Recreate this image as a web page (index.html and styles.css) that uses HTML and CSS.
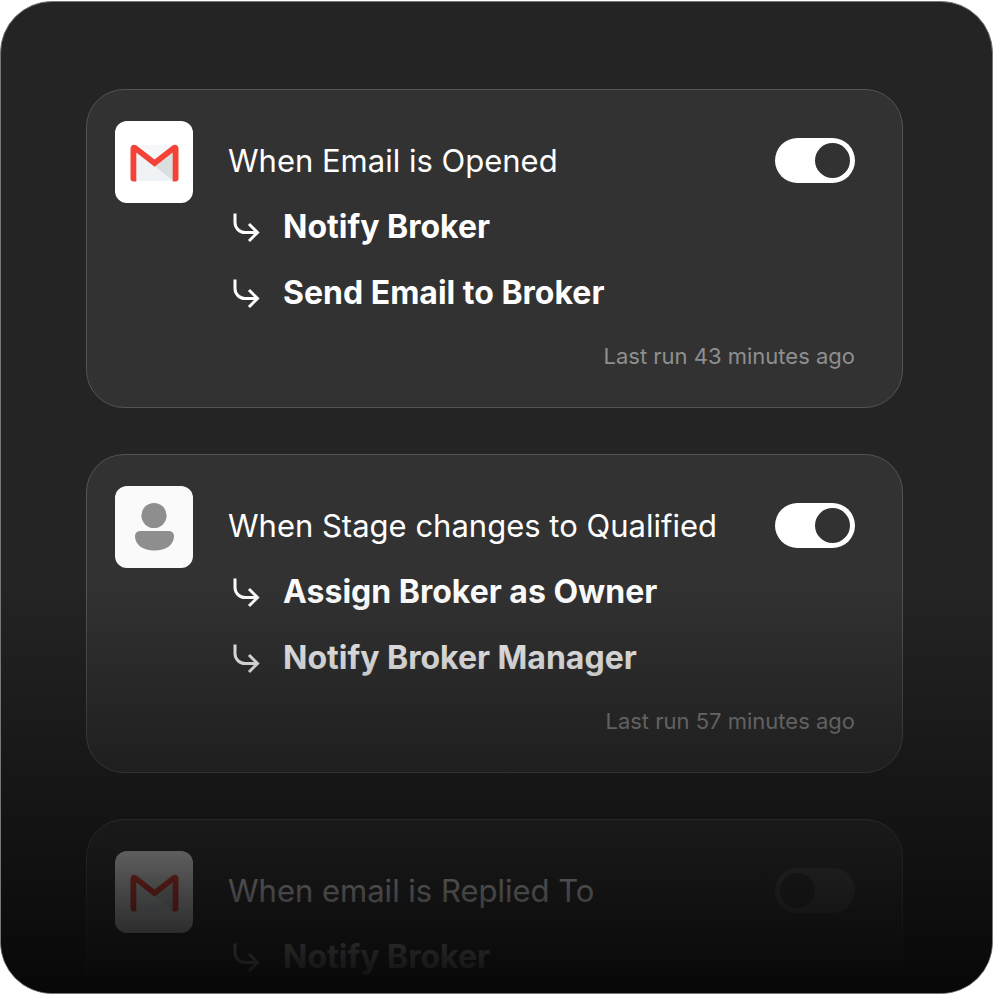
FILE: index.html
```html
<!DOCTYPE html>
<html lang="en">
<head>
	<meta charset="UTF-8">
	<meta name="viewport" content="width=device-width, initial-scale=1">
	<title>Automations</title>
	<link rel="stylesheet" href="styles.css">
</head>
<body>
<!-- shared icons -->
<svg class="sprite" aria-hidden="true">
	<symbol id="gmail" viewBox="0 0 78 82">
		<path fill="#eff3f6" d="M18 24h43v36H18z"/>
		<path fill="#f5f7f9" d="M20 24h39L39.500 39z"/>
		<path fill="#d9dfdf" d="M39.500 45l19-14v29z"/>
		<path fill="#f44336" d="M21.300 60.500h-2.800a3 3 0 0 1-3-3V27.500c0-3.600 3.600-4.800 6-3L39.500 38.600 57.500 24.500c2.400-1.800 6-.6 6 3v30a3 3 0 0 1-3 3h-2.800V31.500L39.500 45.800 21.300 31.500z"/>
	</symbol>
	<symbol id="person" viewBox="0 0 78 82">
		<circle cx="39" cy="29.500" r="12.600"/>
		<path d="M25 45h29a5 5 0 0 1 5 5c0 9-8 14.500-19.500 14.500S20 59 20 50a5 5 0 0 1 5-5z"/>
	</symbol>
	<symbol id="arrow" viewBox="0 0 36 36">
		<path fill="none" stroke="currentColor" stroke-width="3" d="M7 4.500v9a10 10 0 0 0 10 10h12.500M21 15l8.500 8.500L21 32"/>
	</symbol>
</svg>

<main class="panel">
	<div class="list">
		<section class="card">
			<svg class="app" aria-hidden="true"><use href="#gmail"/></svg>
			<div class="content">
				<div class="head">
					<label class="title" for="opened">When Email is Opened</label>
					<input class="toggle" type="checkbox" role="switch" id="opened" checked>
				</div>
				<ul class="actions">
					<li><svg class="arrow" aria-hidden="true"><use href="#arrow"/></svg>Notify Broker</li>
					<li><svg class="arrow" aria-hidden="true"><use href="#arrow"/></svg>Send Email to Broker</li>
				</ul>
				<p class="last-run">Last run 43 minutes ago</p>
			</div>
		</section>

		<section class="card">
			<svg class="app app-person" aria-hidden="true"><use href="#person"/></svg>
			<div class="content">
				<div class="head">
					<label class="title" for="stage">When Stage changes to Qualified</label>
					<input class="toggle" type="checkbox" role="switch" id="stage" checked>
				</div>
				<ul class="actions">
					<li><svg class="arrow" aria-hidden="true"><use href="#arrow"/></svg>Assign Broker as Owner</li>
					<li><svg class="arrow" aria-hidden="true"><use href="#arrow"/></svg>Notify Broker Manager</li>
				</ul>
				<p class="last-run">Last run 57 minutes ago</p>
			</div>
		</section>

		<section class="card">
			<svg class="app" aria-hidden="true"><use href="#gmail"/></svg>
			<div class="content">
				<div class="head">
					<label class="title" for="replied">When email is Replied To</label>
					<input class="toggle" type="checkbox" role="switch" id="replied">
				</div>
				<ul class="actions">
					<li><svg class="arrow" aria-hidden="true"><use href="#arrow"/></svg>Notify Broker</li>
				</ul>
			</div>
		</section>
	</div>
</main>
</body>
</html>
```
FILE: styles.css
```css
* { box-sizing: border-box; }
body, ul, p { margin: 0; padding: 0; }
body {
	height: 100vh;
	padding: 1px 0;
	background: #fff;
	color: #fff;
	font-family: Inter, "Liberation Sans", sans-serif;
}
ul { list-style: none; }
.sprite { display: none; }

.panel {
	position: relative;
	height: 100%;
	padding: 87px 89px 18px 85px;
	border: 1px solid #777;
	border-radius: 52px;
	background: #242424;
	overflow: hidden;
}
/* fade to black at the bottom */
.panel::after {
	content: "";
	position: absolute;
	left: 0;
	right: 0;
	bottom: 0;
	height: 410px;
	background: linear-gradient(rgba(8,8,8,0), #080808);
	pointer-events: none;
}

.list {
	display: flex;
	flex-direction: column;
	gap: 46px;
	height: 100%;
	overflow: hidden;
}
.card {
	display: flex;
	flex: none;
	gap: 35px;
	padding: 31px 47px 36px 28px;
	border: 1px solid #545454;
	border-radius: 38px;
	background: #323232;
}
.card:last-child { padding-bottom: 87px; }

.app {
	flex: none;
	width: 78px;
	height: 82px;
	border-radius: 12px;
	background: #fff;
}
.app-person { background: #fafafa; fill: #8e8e8e; }

.content {
	flex: 1;
	min-width: 0;
	padding-top: 17px;
}
.head {
	display: flex;
	align-items: center;
	justify-content: space-between;
}
.title {
	font-size: 31px;
	font-weight: 400;
	line-height: 45px;
}

.toggle {
	appearance: none;
	flex: none;
	width: 80px;
	height: 45px;
	margin: 0;
	padding: 5px;
	border-radius: 23px;
	background: #4c4c4c;
}
.toggle::before {
	content: "";
	display: block;
	width: 35px;
	height: 35px;
	border-radius: 50%;
	background: #323232;
}
.toggle:checked { background: #fff; }
.toggle:checked::before { margin-left: auto; }

.actions li {
	display: flex;
	align-items: center;
	margin-top: 21px;
	font-size: 32px;
	font-weight: 700;
	line-height: 45px;
}
.arrow {
	flex: none;
	width: 36px;
	height: 36px;
	margin-right: 19px;
}
.last-run {
	margin-top: 26px;
	color: #8f8f8f;
	font-size: 22px;
	line-height: 30px;
	text-align: right;
}
```
